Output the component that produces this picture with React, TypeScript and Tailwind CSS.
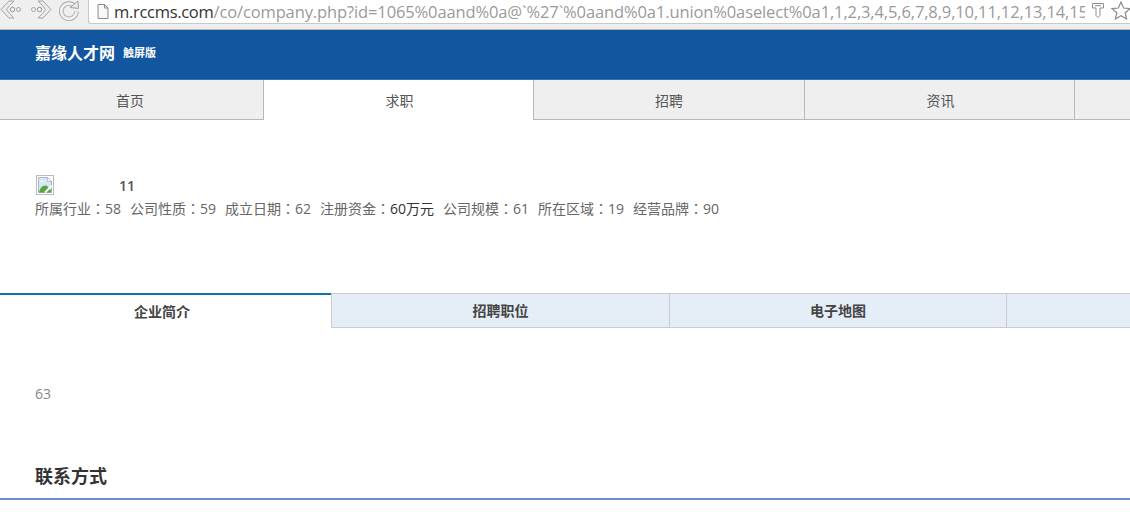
import React from "react";

const cjk = "font-['Open_Sans','Noto_Sans_CJK_SC',sans-serif]";

function BackIcon({ flip = false }: { flip?: boolean }) {
  return (
    <svg width="22" height="20" viewBox="0 0 22 20" fill="none" className={flip ? "-scale-x-100" : ""}>
      <path d="M9 1 L1 9.5 L9 18 L14 18 L9.5 13.5 L6.5 9.5 L9.5 5.5 L14 1 Z" fill="#ececec" stroke="#a4a4a4" strokeWidth="1" />
      <circle cx="12.5" cy="9.5" r="2.2" fill="#f6f6f6" stroke="#8f8f8f" strokeWidth="1" />
      <circle cx="18.5" cy="9.5" r="2" fill="#f6f6f6" stroke="#9f9f9f" strokeWidth="1" />
    </svg>
  );
}

function Reload() {
  return (
    <svg width="20" height="21" viewBox="0 0 20 21" fill="none">
      <path d="M15.5 6 A7.6 7.6 0 1 0 17.5 11.5" stroke="#a8a8a8" strokeWidth="4.6" fill="none" />
      <path d="M15.5 6 A7.6 7.6 0 1 0 17.5 11.5" stroke="#f0f0f0" strokeWidth="2.8" fill="none" />
      <path d="M11 7.5 L19.5 8.5 L19 1 Z" fill="#e9e9e9" stroke="#a0a0a0" strokeWidth="1" />
    </svg>
  );
}

function PageIcon() {
  return (
    <svg width="12" height="15" viewBox="0 0 12 15" fill="none">
      <path d="M1 .5 H7.5 L11 4 V14.5 H1 Z" fill="#f7f7f7" stroke="#8a8a8a" />
      <path d="M7.5 .5 V4 H11" stroke="#8a8a8a" fill="none" />
    </svg>
  );
}

function KeyIcon() {
  return (
    <svg width="12" height="15" viewBox="0 0 12 15" fill="none">
      <path d="M.5 .5 H11.5 V5 H8 V12.5 L6 14.5 L4 12.5 V5 H.5 Z" stroke="#8f8f8f" fill="#fff" />
      <path d="M3 2.7 H9" stroke="#8f8f8f" />
    </svg>
  );
}

function StarIcon() {
  return (
    <svg width="20" height="19" viewBox="0 0 20 19" fill="none">
      <path d="M10 1 L12.6 7 L19 7.6 L14.2 11.8 L15.6 18 L10 14.8 L4.4 18 L5.8 11.8 L1 7.6 L7.4 7 Z" stroke="#8a8a8a" strokeWidth="1.2" fill="#fff" />
    </svg>
  );
}

function BrokenImage() {
  return (
    <svg width="18" height="20" viewBox="0 0 18 20" fill="none">
      <rect x=".5" y=".5" width="17" height="19" fill="#fff" stroke="#bcbcbc" />
      <path d="M2.5 2.5 H11.5 L15.5 6.5 V17.5 H2.5 Z" fill="#d9e6f8" stroke="#9aa5b5" strokeWidth=".8" />
      <path d="M11.5 2.5 V6.5 H15.5 Z" fill="#fff" stroke="#9aa5b5" strokeWidth=".6" />
      <path d="M4 7 C5 5 7 5 8 7 Z" fill="#fff" />
      <path d="M3 17.5 C4 12 8 9.5 11 11 L15 15 V17.5 Z" fill="#58a63f" />
      <path d="M9 17.5 L15.5 11" stroke="#fff" strokeWidth="1.8" />
    </svg>
  );
}

const Colon = () => <span className="font-['Noto_Sans_CJK_TC',sans-serif]">：</span>;

const Field = ({ label, children }: { label: string; children: React.ReactNode }) => (
  <span>
    {label}
    <Colon />
    {children}
  </span>
);

const Nav = ({ w, label, active = false, extra = "" }: { w: string; label: string; active?: boolean; extra?: string }) => (
  <div className={`${w} ${extra} shrink-0 flex items-center justify-center pt-[2px] text-[14px] text-[#555] border-r border-[#b8b8b8] ${active ? "bg-white pb-[2px] relative after:absolute after:bottom-0 after:-right-px after:w-px after:h-px" : "border-b bg-[#efefef]"}`}>
    {label}
  </div>
);

const Tab = ({ w, label, extra = "" }: { w: string; label: string; extra?: string }) => (
  <div className={`${w} ${extra} shrink-0 flex items-center justify-center text-[14px] font-bold text-[#444] bg-[#e5edf7] border-t border-b border-r border-[#cccccc]`}>
    {label}
  </div>
);

export default function App() {
  return (
    <div className={`w-[1130px] h-[520px] overflow-hidden bg-white ${cjk}`}>
      <div className="h-[30px] bg-[#efefef] border-b border-[#b5b5b5] flex items-start">
        <div className="w-[88px] h-[24px] shrink-0 flex items-start overflow-hidden">
          <BackIcon />
          <span className="ml-[8px]"><BackIcon flip /></span>
          <span className="ml-[7px]"><Reload /></span>
        </div>
        <div className="w-[1002px] h-[24px] shrink-0 bg-white border-b border-l border-[#c8c8c8] rounded-bl-[3px] flex items-center pl-[8px] gap-[5px] overflow-hidden">
          <PageIcon />
          <div className="w-[971px] overflow-hidden whitespace-nowrap text-[16.5px] leading-[24px] text-[#9a9a9a] tracking-[-0.12px]">
            <span className="text-[#333] tracking-[-0.3px]">m.rccms.com</span>/co/company.php?id=1065%0aand%0a@`%27`%0aand%0a1.union%0aselect%0a1,1,2,3,4,5,6,7,8,9,10,11,12,13,14,15
          </div>
        </div>
        <div className="flex-1 h-[24px] bg-white border-b border-[#c8c8c8] flex items-center gap-[7px] pl-[2px] pb-[2px]">
          <KeyIcon />
          <StarIcon />
        </div>
      </div>

      <div className="h-[50px] bg-[#11569f] border-b border-[#2a74c4] flex items-center pl-[35px] pb-[3px] text-white font-bold">
        <span className="text-[16px]">嘉缘人才网</span>
        <span className="text-[11px] ml-[8px]">触屏版</span>
      </div>

      <div className="h-[40px] flex">
        <Nav w="w-[264px]" extra="pr-[3px]" label="首页" />
        <Nav w="w-[270px]" extra="pl-[2px]" label="求职" active />
        <Nav w="w-[271px]" label="招聘" />
        <Nav w="w-[270px]" extra="pl-[2px]" label="资讯" />
        <div className="flex-1 bg-[#efefef] border-b border-[#b8b8b8]" />
      </div>

      <div className="pl-[36px] pt-[55px] h-[173px] text-[14px] text-[#666]">
        <div className="flex items-center h-[20px]">
          <BrokenImage />
          <span className="ml-[65px] font-semibold text-[14px] text-[#555]">11</span>
        </div>
        <div className="h-[20px] leading-[20px] whitespace-nowrap flex gap-[9px] text-[14px] mt-[3px] -ml-[1px]">
          <Field label="所属行业">58</Field>
          <Field label="公司性质">59</Field>
          <Field label="成立日期">62</Field>
          <Field label="注册资金"><span className="text-[#333]">60万元</span></Field>
          <Field label="公司规模">61</Field>
          <Field label="所在区域">19</Field>
          <Field label="经营品牌">90</Field>
        </div>
      </div>

      <div className="h-[35px] flex">
        <div className="w-[331px] shrink-0 flex items-center justify-center pr-[7px] text-[14px] font-bold text-[#444] border-t-2 border-[#0a76a8] bg-white">企业简介</div>
        <Tab w="w-[339px]" extra="border-l" label="招聘职位" />
        <Tab w="w-[337px]" label="电子地图" />
        <div className="flex-1 bg-[#e5edf7] border-t border-b border-[#cccccc]" />
      </div>

      <div className="pl-[35px] pt-[57px] text-[14px] leading-[18px] text-[#888]">63</div>

      <div className="mt-[63px] h-[34px] pl-[35px] pb-[11px] flex items-center border-b-2 border-[#6b8fcb] text-[18px] font-bold text-[#333]">联系方式</div>
    </div>
  );
}
